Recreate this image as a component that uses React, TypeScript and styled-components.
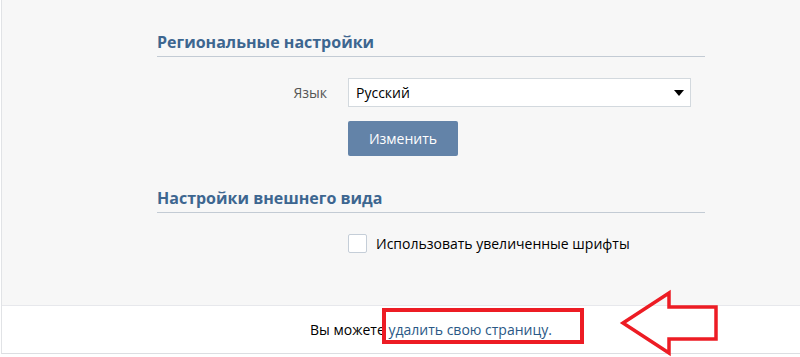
import React, {useState} from "react";
import styled, {createGlobalStyle} from "styled-components";

const GlobalStyle = createGlobalStyle`
    html, body {
        margin: 0;
        padding: 0;
        background: #ffffff;
        overflow: hidden;
    }
    body {
        font-family: "Open Sans", "DejaVu Sans", sans-serif;
        font-size: 14px;
        line-height: 19px;
        color: #000;
    }
`;

const Page = styled.div`
    width: 800px;
    height: 357px;
    overflow: hidden;
    padding-left: 1px;
`;

const Panel = styled.div`
    width: 858px;
    background: #f7f7f7;
    border-left: 1px solid #e1e3e6;
    border-bottom: 1px solid #dcdee2;
`;

const Content = styled.div`
    width: 548px;
    margin: 0 auto;
    padding: 30px 0 52px 0;
`;

const Section = styled.div<{ $gap?: number }>`
    margin-top: ${p => p.$gap ?? 0}px;
`;

const Heading = styled.h2`
    margin: 0;
    padding-bottom: 2px;
    font-size: 16px;
    font-weight: 700;
    color: #3d6690;
    border-bottom: 1px solid #c3cbd4;
    line-height: 24px;
`;

const Row = styled.div<{ $top?: number }>`
    display: grid;
    grid-template-columns: 170px 343px;
    column-gap: 21px;
    align-items: center;
    margin-top: ${p => p.$top ?? 0}px;
`;

const Label = styled.div`
    text-align: right;
    color: #555;
`;

const SelectBox = styled.div`
    position: relative;
    height: 27px;
    background: #fff;
    border: 1px solid #d3d9de;
    display: flex;
    align-items: center;
    padding-left: 7px;
`;

const Caret = styled.span`
    position: absolute;
    right: 6px;
    top: 11px;
    width: 0;
    height: 0;
    border-left: 5px solid transparent;
    border-right: 5px solid transparent;
    border-top: 6px solid #000;
`;

const Button = styled.button`
    display: block;
    width: 110px;
    height: 35px;
    background: #6383a8;
    border: none;
    border-radius: 2px;
    color: #fff;
    font-family: inherit;
    font-size: 14px;
    padding: 0;
`;

const CheckLine = styled.label`
    display: flex;
    align-items: center;
    gap: 9px;
`;

const Box = styled.span<{ $on: boolean }>`
    width: 17px;
    height: 17px;
    background: ${p => p.$on ? "#6383a8" : "#fff"};
    border: 1px solid #c5ced8;
    border-radius: 2px;
`;

const Footer = styled.div`
    position: relative;
    background: #fff;
    border-top: 1px solid #e7e8ec;
    height: 47px;
    display: flex;
    align-items: center;
    justify-content: center;
`;

const FooterText = styled.div`
    color: #000;
`;

const Link = styled.a`
    color: #2a5885;
    text-decoration: none;
`;

const Mark = styled.div`
    position: absolute;
    left: 380px;
    top: 2px;
    width: 194px;
    height: 28px;
    border: 4px solid #ed1c24;
`;

const Arrow = styled.svg`
    position: absolute;
    left: 613px;
    top: -19px;
`;

export default function App() {
    const [big, setBig] = useState(false);
    return (
        <Page>
            <GlobalStyle/>
            <Panel>
                <Content>
                    <Section>
                        <Heading>Региональные настройки</Heading>
                        <Row $top={21}>
                            <Label>Язык</Label>
                            <SelectBox>Русский<Caret/></SelectBox>
                        </Row>
                        <Row $top={14}>
                            <span/>
                            <Button>Изменить</Button>
                        </Row>
                    </Section>
                    <Section $gap={30}>
                        <Heading>Настройки внешнего вида</Heading>
                        <Row $top={21}>
                            <span/>
                            <CheckLine onClick={() => setBig(!big)}>
                                <Box $on={big}/>
                                Использовать увеличенные шрифты
                            </CheckLine>
                        </Row>
                    </Section>
                </Content>
                <Footer>
                    <FooterText>Вы можете <Link href="#">удалить свою страницу.</Link></FooterText>
                    <Mark/>
                    <Arrow width="110" height="70" viewBox="615 287 110 70">
                        <polygon points="623,323 669,293 669,307 716,307 716,339 669,339 669,353"
                                 fill="none" stroke="#ed1c24" strokeWidth="3.5" strokeLinejoin="miter"/>
                    </Arrow>
                </Footer>
            </Panel>
        </Page>
    );
}
